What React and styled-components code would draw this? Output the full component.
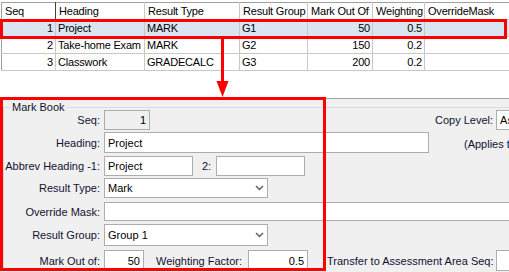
import React from 'react';
import styled, { createGlobalStyle } from 'styled-components';

const GlobalStyle = createGlobalStyle`
  body {
    margin: 0;
    background: #f0f0f0;
  }
`;

const Screen = styled.div`
  position: relative;
  width: 509px;
  height: 272px;
  overflow: hidden;
  background: #f0f0f0;
  font-family: "Liberation Sans", Arial, sans-serif;
  font-size: 11px;
  color: #000;
`;

const GridArea = styled.div`
  height: 99px;
  box-sizing: border-box;
  padding: 2px 0 0 1px;
  background: #fff;
  border-bottom: 1px solid #a0a0a0;
`;

const Table = styled.table`
  border-collapse: collapse;
  table-layout: fixed;
  width: 508px;
  letter-spacing: -0.2px;
  border-top: 1px solid #a0a0a0;
  border-left: 1px solid #a0a0a0;
`;

const Th = styled.th`
  height: 16px;
  padding: 0 1px 0 3px;
  font-weight: normal;
  text-align: left;
  white-space: nowrap;
  overflow: hidden;
  border-bottom: 1px solid #c8c8c8;
  border-right: 1px solid ${p => (p.$dark ? '#404040' : '#c8c8c8')};
`;

const Tr = styled.tr`
  background: ${p => (p.$selected ? '#d9e5f1' : '#fff')};
`;

const Td = styled.td`
  height: 16px;
  padding: 0 2px 0 2px;
  white-space: nowrap;
  overflow: hidden;
  text-align: ${p => (p.$num ? 'right' : 'left')};
  border-bottom: 1px solid #c8c8c8;
  border-right: 1px solid #c8c8c8;
`;

const FormArea = styled.div`
  padding: 8px 0 0 3px;
`;

const GroupBox = styled.div`
  position: relative;
  border: 1px solid #dcdcdc;
  border-right: none;
  border-bottom: none;
  padding-top: 1px;
  height: 170px;
`;

const Caption = styled.span`
  position: absolute;
  top: -7px;
  left: 7px;
  padding: 0 1px;
  line-height: 13px;
  background: #f0f0f0;
  color: #101030;
`;

const Row = styled.div`
  display: flex;
  align-items: center;
  height: ${p => p.$h}px;
  margin-top: ${p => p.$mt}px;
  white-space: nowrap;
`;

const Label = styled.span`
  flex: none;
  width: 96px;
  margin-right: 4px;
  text-align: right;
  color: #101030;
`;

const InlineLabel = styled.span`
  flex: none;
  margin-left: ${p => p.$ml || 0}px;
  margin-right: ${p => p.$mr || 0}px;
  color: #101030;
`;

const Field = styled.div`
  flex: none;
  box-sizing: border-box;
  display: flex;
  align-items: center;
  justify-content: ${p => (p.$num ? 'flex-end' : 'space-between')};
  width: ${p => p.$w}px;
  height: 100%;
  margin-left: ${p => p.$ml || 0}px;
  padding: 0 3px;
  border: 1px solid #adadad;
  background: ${p => (p.$disabled ? '#f0f0f0' : '#fff')};
`;

const Note = styled.span`
  margin-left: ${p => p.$ml}px;
  align-self: flex-end;
  padding-bottom: 3px;
  color: #101030;
`;

const Mark = styled.div`
  position: absolute;
  left: ${p => p.$x}px;
  top: ${p => p.$y}px;
  width: ${p => p.$w}px;
  height: ${p => p.$h}px;
  box-sizing: border-box;
  border: 3px solid #ff0000;
  pointer-events: none;
`;

const Arrow = styled.svg`
  position: absolute;
  left: 215px;
  top: 37px;
`;

const Chevron = () => (
  <svg width="9" height="6" viewBox="0 0 9 6">
    <path d="M1 1 L4.5 4.5 L8 1" fill="none" stroke="#606060" strokeWidth="1.5" />
  </svg>
);

const rows = [
  { seq: 1, heading: 'Project', type: 'MARK', group: 'G1', outOf: 50, weight: 0.5 },
  { seq: 2, heading: 'Take-home Exam', type: 'MARK', group: 'G2', outOf: 150, weight: 0.2 },
  { seq: 3, heading: 'Classwork', type: 'GRADECALC', group: 'G3', outOf: 200, weight: 0.2 },
];

const columns = [54, 89, 95, 68, 65, 52, 85];

export default function App() {
  return (
    <Screen>
      <GlobalStyle />
      <GridArea>
        <Table>
          <colgroup>
            {columns.map((w, i) => <col key={i} style={{ width: w }} />)}
          </colgroup>
          <thead>
            <tr>
              <Th $dark>Seq</Th>
              <Th>Heading</Th>
              <Th>Result Type</Th>
              <Th>Result Group</Th>
              <Th>Mark Out Of</Th>
              <Th>Weighting</Th>
              <Th>OverrideMask</Th>
            </tr>
          </thead>
          <tbody>
            {rows.map(r => (
              <Tr key={r.seq} $selected={r.seq === 1}>
                <Td $num>{r.seq}</Td>
                <Td>{r.heading}</Td>
                <Td>{r.type}</Td>
                <Td>{r.group}</Td>
                <Td $num>{r.outOf}</Td>
                <Td $num>{r.weight}</Td>
                <Td />
              </Tr>
            ))}
          </tbody>
        </Table>
      </GridArea>

      <FormArea>
        <GroupBox>
          <Caption>Mark Book</Caption>
          <Row $h={20} $mt={1}>
            <Label>Seq:</Label>
            <Field $w={46} $num $disabled>1</Field>
            <InlineLabel $ml={285} $mr={3}>Copy Level:</InlineLabel>
            <Field $w={60}>As</Field>
          </Row>
          <Row $h={21} $mt={2}>
            <Label>Heading:</Label>
            <Field $w={325}>Project</Field>
            <Note $ml={35}>(Applies to</Note>
          </Row>
          <Row $h={20} $mt={3}>
            <Label>Abbrev Heading -1:</Label>
            <Field $w={89}>Project</Field>
            <InlineLabel $ml={9} $mr={5}>2:</InlineLabel>
            <Field $w={89} />
          </Row>
          <Row $h={20} $mt={2}>
            <Label>Result Type:</Label>
            <Field $w={164}>Mark<Chevron /></Field>
          </Row>
          <Row $h={19} $mt={4}>
            <Label>Override Mask:</Label>
            <Field $w={420} />
          </Row>
          <Row $h={22} $mt={3}>
            <Label>Result Group:</Label>
            <Field $w={164}>Group 1<Chevron /></Field>
          </Row>
          <Row $h={21} $mt={4}>
            <Label>Mark Out of:</Label>
            <Field $w={40} $num>50</Field>
            <InlineLabel $ml={12} $mr={6}>Weighting Factor:</InlineLabel>
            <Field $w={60} $num>0.5</Field>
            <InlineLabel $ml={19} $mr={2}>Transfer to Assessment Area Seq:</InlineLabel>
            <Field $w={40} />
          </Row>
        </GroupBox>
      </FormArea>

      <Mark $x={0} $y={19} $w={507} $h={20} />
      <Mark $x={0} $y={97} $w={326} $h={174} />
      <Arrow width="16" height="61" viewBox="0 0 16 61">
        <rect x="6" y="0" width="3" height="46" fill="#ff0000" />
        <polygon points="1.5,44 13.5,44 7.5,60" fill="#ff0000" />
      </Arrow>
    </Screen>
  );
}
